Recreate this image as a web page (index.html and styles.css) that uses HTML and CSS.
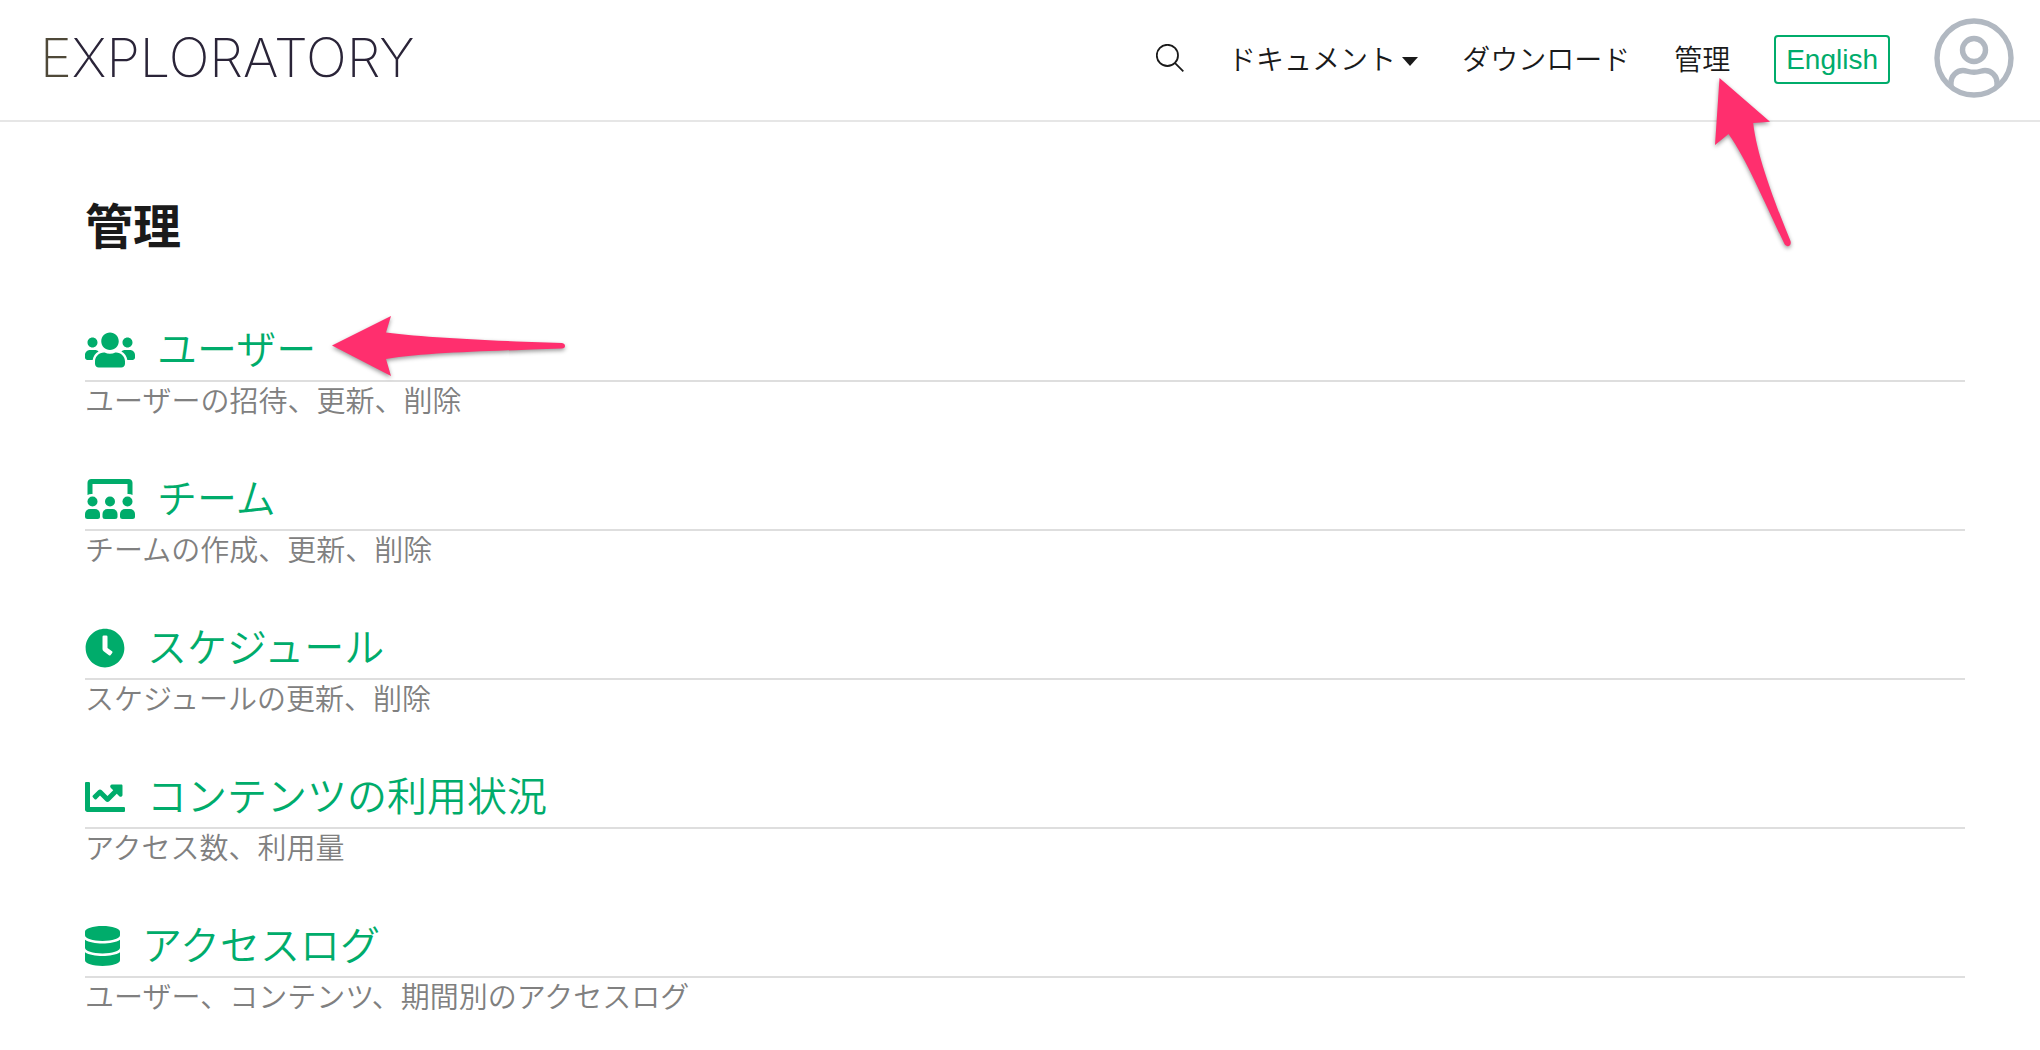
FILE: index.html
```
<!DOCTYPE html>
<html lang="ja">
<head>
    <meta charset="UTF-8">
    <meta name="viewport" content="width=device-width, initial-scale=1.0">
    <title>管理 - Exploratory</title>
    <link rel="stylesheet" href="styles.css">
</head>
<body>
    <header class="header">
        <a class="logo" href="#"><span class="logo-initial">E</span>XPLORATORY</a>
        <nav class="nav">
            <button class="search-btn" type="button" aria-label="検索">
                <svg width="28" height="28" viewBox="0 0 28 28" fill="none" stroke="#1a1a1a" stroke-width="1.8">
                    <circle cx="11.4" cy="11.4" r="10.6"/>
                    <path d="M18.8 18.8L27.3 27.3"/>
                </svg>
            </button>
            <a class="nav-link" href="#">ドキュメント<span class="caret"></span></a>
            <a class="nav-link" href="#">ダウンロード</a>
            <a class="nav-link" href="#">管理
                <svg class="arrow arrow-admin" width="84" height="176" viewBox="0 0 84 176">
                    <path d="M9.5 4L60 47.7L43.2 49C46.5 79 62 122 80.5 167C82 172 77 174 74.5 170C55 130 36 84 18.5 60L5 71Z" fill="#ff2f6e"/>
                </svg>
            </a>
            <button class="lang-btn" type="button">English</button>
            <a class="avatar" href="#" aria-label="アカウント">
                <svg width="80" height="80" viewBox="0 0 80 80" fill="none" stroke="#b1b8c1" stroke-width="5.4">
                    <circle cx="40" cy="40" r="37"/>
                    <circle cx="40" cy="32" r="11.5"/>
                    <path d="M17 68V64.5C17 58 22.5 52.5 29 52.5C33 52.5 34 54.3 40 54.3S47 52.5 51 52.5C57.5 52.5 63 58 63 64.5V68"/>
                </svg>
            </a>
        </nav>
    </header>

    <main class="content">
        <h1>管理</h1>

        <section class="item">
            <h2>
                <a href="#">
                    <svg width="50" height="40" viewBox="0 0 640 512"><path d="M96 224c35.3 0 64-28.7 64-64s-28.7-64-64-64-64 28.7-64 64 28.7 64 64 64zm448 0c35.3 0 64-28.7 64-64s-28.7-64-64-64-64 28.7-64 64 28.7 64 64 64zm32 32h-64c-17.6 0-33.5 7.1-45.1 18.6 40.3 22.1 68.9 62 75.1 109.4h66c17.7 0 32-14.3 32-32v-32c0-35.3-28.7-64-64-64zm-256 0c61.9 0 112-50.1 112-112S381.9 32 320 32 208 82.1 208 144s50.1 112 112 112zm76.8 32h-8.3c-20.8 10-43.9 16-68.5 16s-47.6-6-68.5-16h-8.3C179.6 288 128 339.6 128 403.2V432c0 26.5 21.5 48 48 48h288c26.5 0 48-21.5 48-48v-28.8c0-63.6-51.6-115.2-115.2-115.2zm-223.7-13.4C161.5 263.1 145.6 256 128 256H64c-35.3 0-64 28.7-64 64v32c0 17.7 14.3 32 32 32h65.9c6.3-47.4 34.9-87.3 75.2-109.4z"/></svg>
                    ユーザー
                </a>
                <svg class="arrow arrow-users" width="240" height="68" viewBox="0 0 240 68">
                    <path d="M3 33.5L62 4L57 20.5C100 26 170 29 233 31C237 31.5 237 36.5 233 36.5C170 39 100 40 57 47L62 64Z" fill="#ff2f6e"/>
                </svg>
            </h2>
            <p>ユーザーの招待、更新、削除</p>
        </section>

        <section class="item">
            <h2>
                <a href="#">
                    <svg width="50" height="40" viewBox="0 0 640 512">
                        <path d="M32 205V48C32 21 53 0 80 0H560C587 0 608 21 608 48V205C590 194 569 190 544 192V64H96V192C71 190 50 194 32 205Z"/>
                        <circle cx="96" cy="288" r="64"/>
                        <circle cx="320" cy="288" r="64"/>
                        <circle cx="544" cy="288" r="64"/>
                        <path d="M64 384h64a64 64 0 0 1 64 64v32a32 32 0 0 1-32 32H32a32 32 0 0 1-32-32v-32a64 64 0 0 1 64-64z"/>
                        <path d="M288 384h64a64 64 0 0 1 64 64v32a32 32 0 0 1-32 32H256a32 32 0 0 1-32-32v-32a64 64 0 0 1 64-64z"/>
                        <path d="M512 384h64a64 64 0 0 1 64 64v32a32 32 0 0 1-32 32H480a32 32 0 0 1-32-32v-32a64 64 0 0 1 64-64z"/>
                    </svg>
                    チーム
                </a>
            </h2>
            <p>チームの作成、更新、削除</p>
        </section>

        <section class="item">
            <h2>
                <a href="#">
                    <svg width="40" height="40" viewBox="0 0 512 512"><path d="M256,8C119,8,8,119,8,256S119,504,256,504,504,393,504,256,393,8,256,8Zm92.49,313h0l-20,25a16,16,0,0,1-22.49,2.5h0l-67-49.72a40,40,0,0,1-15-31.23V112a16,16,0,0,1,16-16h32a16,16,0,0,1,16,16V256l58,42.5A16,16,0,0,1,348.49,321Z"/></svg>
                    スケジュール
                </a>
            </h2>
            <p>スケジュールの更新、削除</p>
        </section>

        <section class="item">
            <h2>
                <a href="#">
                    <svg width="40" height="40" viewBox="0 0 512 512"><path d="M496 384H64V80c0-8.84-7.16-16-16-16H16C7.16 64 0 71.16 0 80v336c0 17.67 14.33 32 32 32h464c8.84 0 16-7.16 16-16v-32c0-8.84-7.16-16-16-16zM464 96H345.94c-21.38 0-32.09 25.85-16.97 40.97l32.4 32.4L288 242.75l-73.37-73.37c-12.5-12.5-32.76-12.5-45.25 0l-68.69 68.69c-6.25 6.25-6.25 16.38 0 22.63l22.62 22.62c6.25 6.25 16.38 6.25 22.63 0L192 237.25l73.37 73.37c12.5 12.5 32.76 12.5 45.25 0l96-96 32.4 32.4c15.12 15.12 40.97 4.41 40.97-16.97V112c.01-8.84-7.15-16-15.99-16z"/></svg>
                    コンテンツの利用状況
                </a>
            </h2>
            <p>アクセス数、利用量</p>
        </section>

        <section class="item">
            <h2>
                <a href="#">
                    <svg width="35" height="40" viewBox="0 0 448 512"><path d="M448 73.143v45.714C448 159.143 347.667 192 224 192S0 159.143 0 118.857V73.143C0 32.857 100.333 0 224 0s224 32.857 224 73.143zM448 176v102.857C448 319.143 347.667 352 224 352S0 319.143 0 278.857V176c48.125 33.143 136.208 48.572 224 48.572S399.874 209.143 448 176zm0 160v102.857C448 479.143 347.667 512 224 512S0 479.143 0 438.857V336c48.125 33.143 136.208 48.572 224 48.572S399.874 369.143 448 336z"/></svg>
                    アクセスログ
                </a>
            </h2>
            <p>ユーザー、コンテンツ、期間別のアクセスログ</p>
        </section>
    </main>
</body>
</html>
```
FILE: styles.css
```
* {
    box-sizing: border-box;
}

body {
    margin: 0;
    background: #fff;
    color: #1a1a1a;
    font-family: "Liberation Sans", "Noto Sans CJK JP", sans-serif;
    font-size: 28px;
    font-weight: 350;
}

a {
    color: inherit;
    text-decoration: none;
}

svg {
    display: block;
    flex-shrink: 0;
}

button {
    background: none;
    border: none;
    padding: 0;
    font: inherit;
    cursor: pointer;
}

.header {
    display: flex;
    justify-content: space-between;
    align-items: center;
    height: 122px;
    padding: 0 26px 4px 40px;
    border-bottom: 2px solid #e6e6e6;
}

.logo {
    font-family: Inter, sans-serif;
    font-size: 54px;
    font-weight: 200;
    line-height: 60px;
    color: #2a2438;
}

.logo-initial {
    color: #4f4939;
}

.nav {
    display: flex;
    align-items: center;
    gap: 44px;
}

.nav-link {
    position: relative;
    display: flex;
    align-items: center;
    padding-top: 6px;
    line-height: 40px;
}

.caret {
    margin-left: 6px;
    border-top: 9px solid #1a1a1a;
    border-left: 8px solid transparent;
    border-right: 8px solid transparent;
}

.lang-btn {
    height: 49px;
    margin-top: 2px;
    padding: 2px 10px 0;
    border: 2px solid #00ac6b;
    border-radius: 4px;
    color: #00ac6b;
}

/* pointer arrows drawn over the page */
.arrow {
    position: absolute;
    filter: drop-shadow(0 2px 2px rgba(0, 0, 0, 0.4));
}

.arrow-admin {
    top: 39px;
    left: 36px;
}

.arrow-users {
    top: -8px;
    left: 244px;
}

.content {
    padding: 72px 75px 30px 85px;
}

h1 {
    margin: 0 0 58px;
    font-size: 48px;
    font-weight: 700;
    line-height: 68px;
}

.item {
    margin-bottom: 47px;
}

.item h2 {
    position: relative;
    margin: 0;
    border-bottom: 2px solid #dedede;
    font-size: 40px;
    font-weight: 350;
    line-height: 60px;
}

.item h2 a {
    display: inline-flex;
    align-items: center;
    gap: 22px;
    height: 60px;
    vertical-align: top;
    color: #00ac6b;
    fill: #00ac6b;
}

.item p {
    margin: 0;
    font-size: 29px;
    line-height: 40px;
    color: #808080;
}
```
